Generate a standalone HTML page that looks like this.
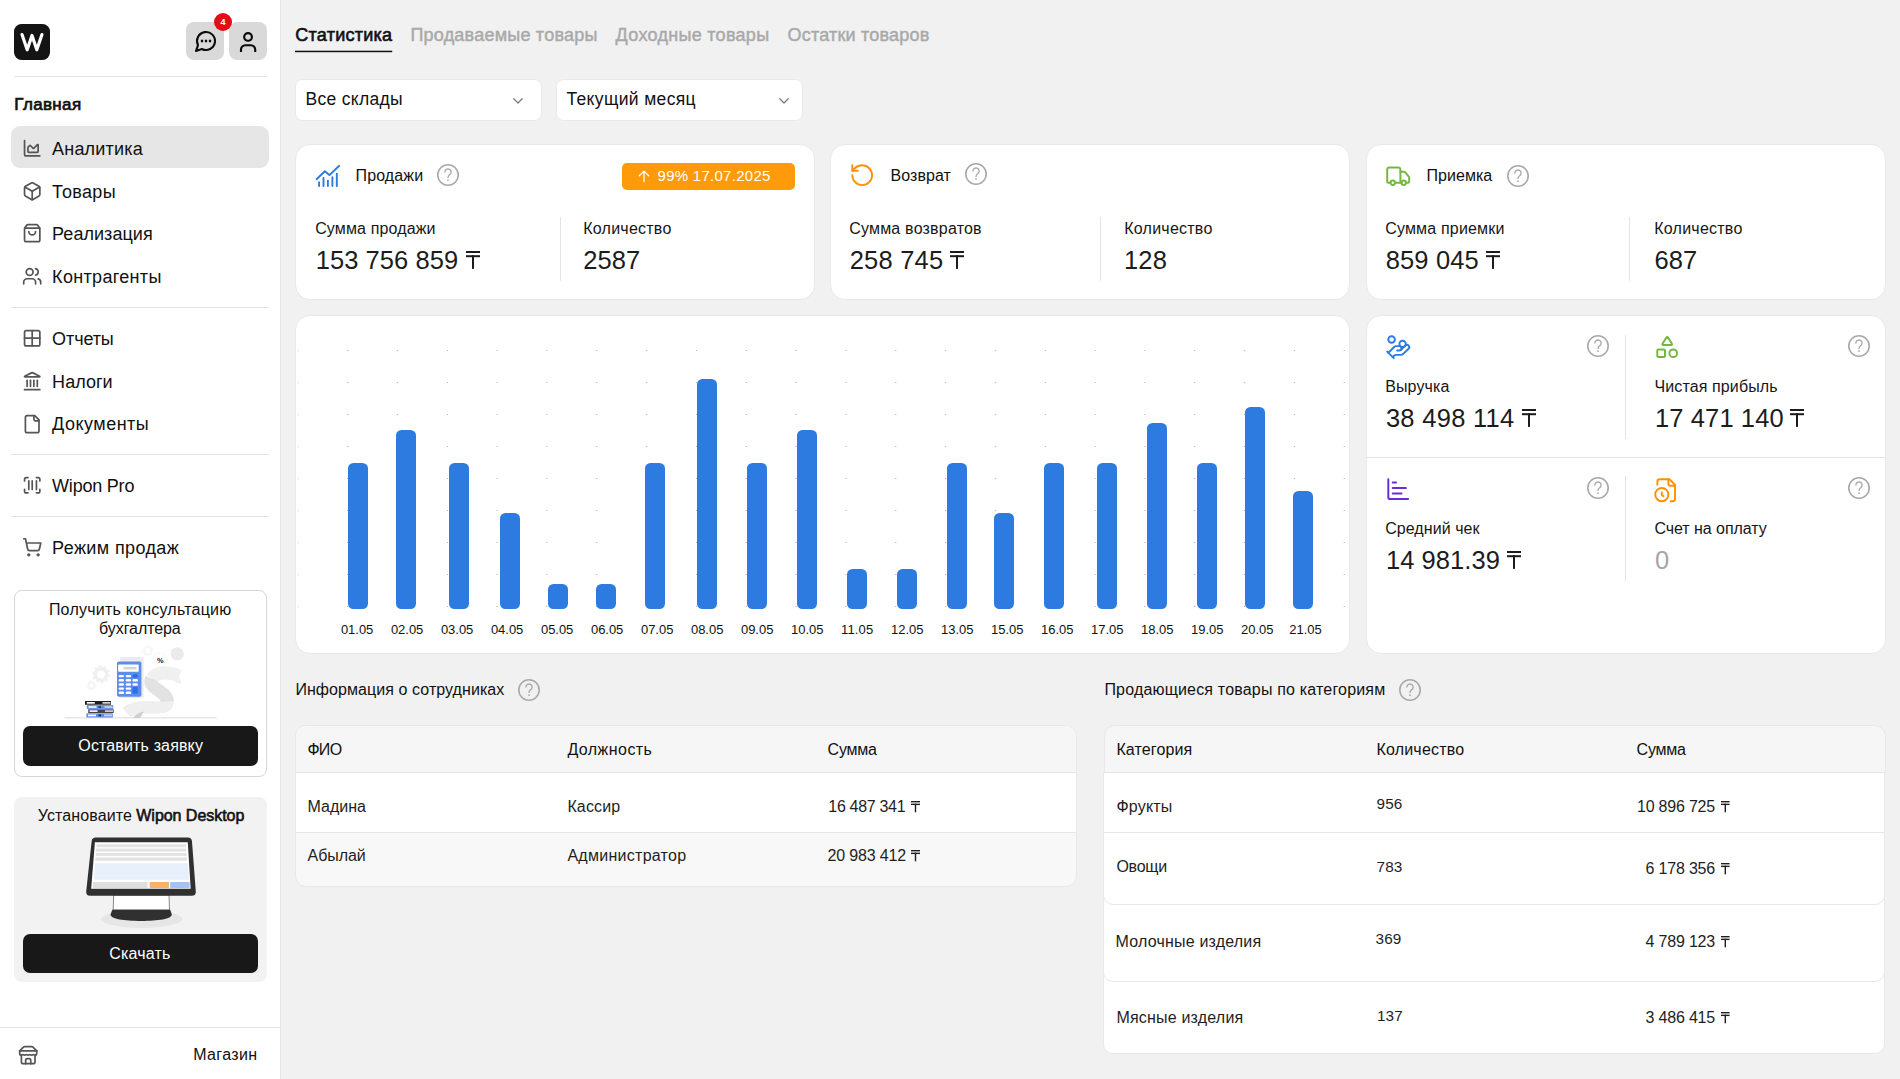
<!DOCTYPE html><html><head><meta charset="utf-8"><title>Wipon</title><style>html,body{margin:0;padding:0;overflow:hidden}body{width:1900px;height:1079px;position:relative;overflow:hidden;background:#f1f1f1;font-family:"Liberation Sans",sans-serif;}.t{position:absolute;white-space:pre;font-family:"Liberation Sans",sans-serif;}</style></head><body><div style="position:absolute;left:0px;top:0px;width:280px;height:1079px;background:#fff;border-radius:0px;box-sizing:border-box;"></div>
<div style="position:absolute;left:280px;top:0px;width:1px;height:1079px;background:#e6e6e6;border-radius:0px;box-sizing:border-box;"></div>
<div style="position:absolute;left:14px;top:24px;width:36px;height:36px;background:#141414;border-radius:7.5px;box-sizing:border-box;"></div>
<svg style="position:absolute;left:14px;top:24px;overflow:visible" width="36" height="36" viewBox="0 0 36 36" ><path d="M8 10.600 L13.200 25.800 L18 11.400 L22.800 25.800 L28 10.600" fill="none" stroke="#fff" stroke-width="3.200" stroke-linejoin="round" stroke-linecap="round"/></svg>
<div style="position:absolute;left:186px;top:22px;width:38px;height:38px;background:#d9d9d9;border-radius:8px;box-sizing:border-box;"></div>
<div style="position:absolute;left:229px;top:22px;width:38px;height:38px;background:#d9d9d9;border-radius:8px;box-sizing:border-box;"></div>
<svg style="position:absolute;left:194.1px;top:28.9px;overflow:visible" width="24" height="24" viewBox="0 0 24 24" ><g fill="none" stroke="#0a0a0a" stroke-width="2.1" stroke-linecap="round" stroke-linejoin="round"><path d="M7.900 20A9 9 0 1 0 4 16.100L2 22Z"/><path d="M8 12h.01M12 12h.01M16 12h.01" stroke-width="2.300" stroke-linecap="square"/></g></svg>
<svg style="position:absolute;left:229px;top:22px;overflow:visible" width="38" height="38" viewBox="0 0 38 38" ><g fill="none" stroke="#0a0a0a" stroke-width="2.150"><circle cx="19.050" cy="14.900" r="3.850"/><path d="M12 29.900 V27.500 a4.300 4.300 0 0 1 4.300 -4.300 h5.600 a4.300 4.300 0 0 1 4.300 4.300 V29.900"/></g></svg>
<div style="position:absolute;left:214.1px;top:12.9px;width:18px;height:18px;background:#e30d18;border-radius:9px;box-sizing:border-box;"></div>
<div style="position:absolute;left:14px;top:76px;width:253px;height:1px;background:#e4e4e4;border-radius:0px;box-sizing:border-box;"></div>
<div style="position:absolute;left:11px;top:126px;width:258px;height:42px;background:#e6e6e6;border-radius:9px;box-sizing:border-box;"></div>
<svg style="position:absolute;left:21.8px;top:137.65px;overflow:visible" width="20.4" height="20.4" viewBox="0 0 24 24" ><g fill="none" stroke="#555" stroke-width="2" stroke-linecap="round" stroke-linejoin="round"><path d="M3 3v16a2 2 0 0 0 2 2h16"/><path d="M7 11.207a.5.5 0 0 1 .146-.353l2-2a.5.5 0 0 1 .708 0l3.292 3.292a.5.5 0 0 0 .708 0l4.292-4.292a.5.5 0 0 1 .854.353V16a1 1 0 0 1-1 1H8a1 1 0 0 1-1-1z"/></g></svg>
<svg style="position:absolute;left:21.8px;top:180.60000000000002px;overflow:visible" width="20.4" height="20.4" viewBox="0 0 24 24" ><g fill="none" stroke="#555" stroke-width="2" stroke-linecap="round" stroke-linejoin="round"><path d="M21 8a2 2 0 0 0-1-1.730l-7-4a2 2 0 0 0-2 0l-7 4A2 2 0 0 0 3 8v8a2 2 0 0 0 1 1.730l7 4a2 2 0 0 0 2 0l7-4A2 2 0 0 0 21 16Z"/><path d="m3.300 7 8.700 5 8.700-5"/><path d="M12 22V12"/></g></svg>
<svg style="position:absolute;left:21.8px;top:223.3px;overflow:visible" width="20.4" height="20.4" viewBox="0 0 24 24" ><g fill="none" stroke="#555" stroke-width="2" stroke-linecap="round" stroke-linejoin="round"><path d="M16 10a4 4 0 0 1-8 0"/><path d="M3.103 6.034h17.794"/><path d="M3.400 5.467a2 2 0 0 0-.4 1.200V20a2 2 0 0 0 2 2h14a2 2 0 0 0 2-2V6.667a2 2 0 0 0-.4-1.200l-2-2.667A2 2 0 0 0 17 2H7a2 2 0 0 0-1.600.8z"/></g></svg>
<svg style="position:absolute;left:21.8px;top:266.0px;overflow:visible" width="20.4" height="20.4" viewBox="0 0 24 24" ><g fill="none" stroke="#555" stroke-width="2" stroke-linecap="round" stroke-linejoin="round"><path d="M16 21v-2a4 4 0 0 0-4-4H6a4 4 0 0 0-4 4v2"/><circle cx="9" cy="7" r="4"/><path d="M22 21v-2a4 4 0 0 0-3-3.870"/><path d="M16 3.130a4 4 0 0 1 0 7.750"/></g></svg>
<svg style="position:absolute;left:21.8px;top:327.8px;overflow:visible" width="20.4" height="20.4" viewBox="0 0 24 24" ><g fill="none" stroke="#555" stroke-width="2" stroke-linecap="round" stroke-linejoin="round"><rect x="3" y="3" width="18" height="18" rx="2"/><path d="M3 12h18"/><path d="M12 3v18"/></g></svg>
<svg style="position:absolute;left:21.8px;top:370.8px;overflow:visible" width="20.4" height="20.4" viewBox="0 0 24 24" ><g fill="none" stroke="#555" stroke-width="2" stroke-linecap="round" stroke-linejoin="round"><path d="M10 18v-7"/><path d="M11.120 2.198a2 2 0 0 1 1.760.006l7.866 3.847c.476.233.310.949-.220.949H3.474c-.530 0-.695-.716-.220-.949z"/><path d="M14 18v-7"/><path d="M18 18v-7"/><path d="M3 22h18"/><path d="M6 18v-7"/></g></svg>
<svg style="position:absolute;left:21.8px;top:413.5px;overflow:visible" width="20.4" height="20.4" viewBox="0 0 24 24" ><g fill="none" stroke="#555" stroke-width="2" stroke-linecap="round" stroke-linejoin="round"><path d="M15 2H6a2 2 0 0 0-2 2v16a2 2 0 0 0 2 2h12a2 2 0 0 0 2-2V7Z"/><path d="M14 2v4a2 2 0 0 0 2 2h4"/></g></svg>
<svg style="position:absolute;left:21.8px;top:474.8px;overflow:visible" width="20.4" height="20.4" viewBox="0 0 24 24" ><g fill="none" stroke="#555" stroke-width="2" stroke-linecap="round" stroke-linejoin="round"><path d="M3 7V5a2 2 0 0 1 2-2h2"/><path d="M17 3h2a2 2 0 0 1 2 2v2"/><path d="M21 17v2a2 2 0 0 1-2 2h-2"/><path d="M7 21H5a2 2 0 0 1-2-2v-2"/><path d="M8 7v10"/><path d="M12 7v10"/><path d="M17 7v10"/></g></svg>
<svg style="position:absolute;left:21.8px;top:536.6999999999999px;overflow:visible" width="20.4" height="20.4" viewBox="0 0 24 24" ><g fill="none" stroke="#555" stroke-width="2" stroke-linecap="round" stroke-linejoin="round"><circle cx="8" cy="21" r="1"/><circle cx="19" cy="21" r="1"/><path d="M2.050 2.050h2l2.660 12.420a2 2 0 0 0 2 1.580h9.780a2 2 0 0 0 1.950-1.570l1.650-7.430H5.120"/></g></svg>
<div style="position:absolute;left:11px;top:307px;width:258px;height:1px;background:#e4e4e4;border-radius:0px;box-sizing:border-box;"></div>
<div style="position:absolute;left:11px;top:454px;width:258px;height:1px;background:#e4e4e4;border-radius:0px;box-sizing:border-box;"></div>
<div style="position:absolute;left:11px;top:516px;width:258px;height:1px;background:#e4e4e4;border-radius:0px;box-sizing:border-box;"></div>
<div style="position:absolute;left:14px;top:590px;width:253px;height:187px;background:#fff;border-radius:8px;border:1px solid #d6d6d6;box-sizing:border-box;"></div>
<div style="position:absolute;left:23px;top:726px;width:235px;height:40px;background:#181818;border-radius:7px;box-sizing:border-box;"></div>
<div style="position:absolute;left:14px;top:797px;width:253px;height:185px;background:#f2f2f2;border-radius:8px;box-sizing:border-box;"></div>
<div style="position:absolute;left:23px;top:934px;width:235px;height:39px;background:#181818;border-radius:7px;box-sizing:border-box;"></div>
<div style="position:absolute;left:0px;top:1027px;width:280px;height:1px;background:#e4e4e4;border-radius:0px;box-sizing:border-box;"></div>
<svg style="position:absolute;left:17.85px;top:1044.85px;overflow:visible" width="20.4" height="20.4" viewBox="0 0 24 24" ><g fill="none" stroke="#555" stroke-width="2" stroke-linecap="round" stroke-linejoin="round"><path d="m2 7 4.410-4.410A2 2 0 0 1 7.830 2h8.340a2 2 0 0 1 1.420.590L22 7"/><path d="M4 12v8a2 2 0 0 0 2 2h12a2 2 0 0 0 2-2v-8"/><path d="M15 22v-4a2 2 0 0 0-2-2h-2a2 2 0 0 0-2 2v4"/><path d="M2 7h20"/><path d="M22 7v3a2 2 0 0 1-2 2a2.700 2.700 0 0 1-1.590-.630.700.700 0 0 0-.820 0A2.700 2.700 0 0 1 16 12a2.700 2.700 0 0 1-1.590-.630.700.700 0 0 0-.820 0A2.700 2.700 0 0 1 12 12a2.700 2.700 0 0 1-1.590-.630.700.700 0 0 0-.820 0A2.700 2.700 0 0 1 8 12a2.700 2.700 0 0 1-1.590-.630.700.700 0 0 0-.820 0A2.700 2.700 0 0 1 4 12a2 2 0 0 1-2-2V7"/></g></svg>
<svg style="position:absolute;left:0;top:0" width="280" height="1079" viewBox="0 0 280 1079">
<g>
<rect x="64.5" y="717.2" width="152" height="1.3" fill="#e4e4e4"/>
<g fill="none" stroke="#f0f0f0">
<circle cx="101.1" cy="674.4" r="5.8" stroke-width="3.6"/>
<circle cx="101.1" cy="674.4" r="8.3" stroke-width="1.6" stroke-dasharray="2.6 2.6"/>
<circle cx="91.5" cy="685.4" r="3" stroke-width="1.8" stroke="#f4f4f4"/>
<circle cx="91.5" cy="685.4" r="4.4" stroke-width="1" stroke-dasharray="1.6 1.6" stroke="#f4f4f4"/>
<circle cx="147.7" cy="650.6" r="3.6" stroke-width="2" stroke="#f6f6f6"/>
<circle cx="147.7" cy="650.6" r="5.2" stroke-width="1" stroke-dasharray="1.8 1.8" stroke="#f6f6f6"/>
</g>
<circle cx="177.2" cy="653.9" r="6.6" fill="#ebebeb"/>
<circle cx="160.2" cy="659.9" r="7" fill="#fff" stroke="#e4e4e4" stroke-width="0.7" stroke-dasharray="1.2 1.2"/>
<text x="160.3" y="662.600" font-family="Liberation Sans" font-size="7.4" font-weight="700" text-anchor="middle" fill="#1e1e1e">%</text>
<path d="M179 676 C170 671.5 157 671.5 151.5 678.5" fill="none" stroke="#f0f0f0" stroke-width="13"/>
<path d="M175.800 668.800 L181.800 683.500 L176 683 L170 670.500Z" fill="#f0f0f0"/>
<path d="M167.500 701 C168.500 714.500 141 700.500 126.500 712.500" fill="none" stroke="#efefef" stroke-width="12.5"/>
<path d="M151.500 678.500 C147 689 166.500 690 167.500 701.500" fill="none" stroke="#e2e2e2" stroke-width="13"/>
<path d="M133 718 C136 714 140 712 144 711.500 L140 718Z" fill="#cfcfcf"/>
<rect x="120" y="657" width="23.600" height="41" rx="1.500" fill="#ebebeb"/>
<rect x="117" y="661.500" width="24.400" height="35.300" rx="1.800" fill="#5b8def"/>
<rect x="118.100" y="664.600" width="20.600" height="7.200" rx="0.800" fill="#fff"/>
<rect x="123.500" y="667" width="13" height="2.400" fill="#c9c9c9" opacity=".8"/>
<g fill="#fff">
<rect x="118.600" y="674.900" width="5.400" height="2.400" rx="1.200"/><rect x="125.700" y="674.900" width="5.400" height="2.400" rx="1.200"/>
<rect x="118.600" y="679" width="5.400" height="2.600" rx="1.200"/><rect x="125.700" y="679" width="5.400" height="2.600" rx="1.200"/><rect x="132.500" y="679" width="5.400" height="2.600" rx="1.200"/>
<rect x="118.600" y="683.200" width="5.400" height="2.500" rx="1.200"/><rect x="125.700" y="683.200" width="5.400" height="2.500" rx="1.200"/><rect x="132.500" y="683.200" width="5.400" height="2.500" rx="1.200"/>
<rect x="118.600" y="687.400" width="5.400" height="2.400" rx="1.200"/><rect x="125.700" y="687.400" width="5.400" height="2.400" rx="1.200"/>
<rect x="118.600" y="691.600" width="5.400" height="2.500" rx="1.200"/><rect x="125.700" y="691.600" width="5.400" height="2.500" rx="1.200"/>
</g>
<ellipse cx="135.200" cy="676" rx="2.800" ry="1.900" fill="#2f6ee8"/>
<rect x="132.500" y="687" width="5.400" height="6.800" rx="1" fill="#2f6ee8"/>
<rect x="85" y="701" width="26" height="3.700" fill="#1c1c1c"/>
<rect x="86.800" y="705.100" width="26.400" height="3.800" fill="#5b8def"/>
<rect x="88.200" y="709.300" width="25.500" height="3.700" fill="#454545"/>
<rect x="86.400" y="713.300" width="26.400" height="4.200" fill="#5b8def"/>
<g fill="#fff"><rect x="86.800" y="702" width="8" height="1.700"/><rect x="88.500" y="706.200" width="8" height="1.600"/><rect x="89.500" y="710.300" width="8" height="1.600"/><rect x="88" y="714.500" width="8" height="1.800"/></g>
<g fill="#d6d6d6"><rect x="102.500" y="702" width="8" height="1.700"/><rect x="104.500" y="706.200" width="8" height="1.600"/><rect x="105" y="710.300" width="8" height="1.600"/><rect x="104" y="714.500" width="8" height="1.800"/></g>
<g fill="#2a2a2a"><rect x="98.500" y="706.200" width="2.500" height="1.600"/><rect x="98.500" y="714.500" width="2.500" height="1.800"/></g>
</g><ellipse cx="141.700" cy="919.200" rx="40.700" ry="8.700" fill="#e6e6e6"/><path d="M113.700 895 H169 L169.500 910 H113.200Z" fill="#fff" stroke="#3a3a3a" stroke-width=".6"/><path d="M112.300 909.700 H170.200 L171.800 914.500 C171.800 919 158 920.900 141.200 920.900 C124 920.900 110.500 919 110.500 914.500Z" fill="#303030"/><path d="M95.800 837.400 H187.700 Q191.700 837.400 192 841.400 L195.800 891.500 Q196.100 895.700 191.800 895.700 H90.200 Q85.900 895.700 86.200 891.500 L91.600 841.400 Q92 837.400 95.800 837.400Z" fill="#303030"/><path d="M94.900 842.300 H187.800 L190.700 888.800 H91.200Z" fill="#fff"/><g fill="#e2e2e2"><rect x="96.400" y="844.300" width="89.600" height="2.900"/><rect x="96" y="848.600" width="90.400" height="2.900"/><rect x="95.700" y="853" width="91" height="2.900"/><rect x="95.400" y="857.400" width="91.600" height="3.300"/></g><path d="M95 863.200 H187.900 L189 879.800 H93.700Z" fill="#e8f0fc"/><rect x="93" y="882" width="54.600" height="6" fill="#dedede"/><rect x="149.700" y="882" width="19.300" height="6" fill="#f5b26b"/><rect x="170.200" y="882" width="19.400" height="6" fill="#a4c2f4"/></svg>
<svg style="position:absolute;left:295px;top:50px;overflow:visible" width="98" height="3" viewBox="0 0 98 3" ><rect x="0" y="0.700" width="97.200" height="1.500" fill="#111"/></svg>
<div style="position:absolute;left:295px;top:79px;width:247px;height:42px;background:#fff;border-radius:7.5px;border:1px solid #e9e9e9;box-sizing:border-box;"></div>
<div style="position:absolute;left:556px;top:79px;width:247px;height:42px;background:#fff;border-radius:7.5px;border:1px solid #e9e9e9;box-sizing:border-box;"></div>
<svg style="position:absolute;left:513.2px;top:97.6px;overflow:visible" width="10" height="6" viewBox="0 0 10 6" ><path d="M0.8 0.8 L5 5 L9.200 0.8" fill="none" stroke="#7a7a7a" stroke-width="1.3" stroke-linecap="round" stroke-linejoin="round"/></svg>
<svg style="position:absolute;left:779px;top:97.6px;overflow:visible" width="10" height="6" viewBox="0 0 10 6" ><path d="M0.8 0.8 L5 5 L9.200 0.8" fill="none" stroke="#7a7a7a" stroke-width="1.3" stroke-linecap="round" stroke-linejoin="round"/></svg>
<div style="position:absolute;left:295px;top:144px;width:520px;height:156px;background:#fff;border-radius:15px;border:1px solid #e9e9e9;box-sizing:border-box;"></div>
<div style="position:absolute;left:830px;top:144px;width:520px;height:156px;background:#fff;border-radius:15px;border:1px solid #e9e9e9;box-sizing:border-box;"></div>
<div style="position:absolute;left:1366px;top:144px;width:520px;height:156px;background:#fff;border-radius:15px;border:1px solid #e9e9e9;box-sizing:border-box;"></div>
<svg style="position:absolute;left:466px;top:251.1px;overflow:visible" width="14" height="17.9" viewBox="0 0 14 17.9" ><rect x="0" y="0" width="14" height="2.0" fill="#1c1c1c"/><rect x="0" y="4.206499999999999" width="14" height="2.0" fill="#1c1c1c"/><rect x="6.0" y="4.206499999999999" width="2.0" height="13.6935" fill="#1c1c1c"/></svg>
<div style="position:absolute;left:560px;top:217px;width:1px;height:64px;background:#e4e4e4;border-radius:0px;box-sizing:border-box;"></div>
<svg style="position:absolute;left:950px;top:251.1px;overflow:visible" width="14" height="17.9" viewBox="0 0 14 17.9" ><rect x="0" y="0" width="14" height="2.0" fill="#1c1c1c"/><rect x="0" y="4.206499999999999" width="14" height="2.0" fill="#1c1c1c"/><rect x="6.0" y="4.206499999999999" width="2.0" height="13.6935" fill="#1c1c1c"/></svg>
<div style="position:absolute;left:1100px;top:217px;width:1px;height:64px;background:#e4e4e4;border-radius:0px;box-sizing:border-box;"></div>
<svg style="position:absolute;left:1485.6px;top:251.1px;overflow:visible" width="14" height="17.9" viewBox="0 0 14 17.9" ><rect x="0" y="0" width="14" height="2.0" fill="#1c1c1c"/><rect x="0" y="4.206499999999999" width="14" height="2.0" fill="#1c1c1c"/><rect x="6.0" y="4.206499999999999" width="2.0" height="13.6935" fill="#1c1c1c"/></svg>
<div style="position:absolute;left:1629px;top:217px;width:1px;height:64px;background:#e4e4e4;border-radius:0px;box-sizing:border-box;"></div>
<svg style="position:absolute;left:435.9px;top:163.1px;overflow:visible" width="24.0" height="24.0" viewBox="0 0 24.0 24.0" ><circle cx="12.0" cy="12.0" r="10.2" fill="none" stroke="#a9a9a9" stroke-width="1.6"/><path d="M8.9 9.1a3.1 3.1 0 1 1 4.7 2.7c-1.1.7-1.6 1.3-1.6 2.6" fill="none" stroke="#a9a9a9" stroke-width="1.35" stroke-linecap="round"/><circle cx="12.0" cy="17.1" r="0.95" fill="#a9a9a9"/></svg>
<svg style="position:absolute;left:964.0px;top:162.0px;overflow:visible" width="24.0" height="24.0" viewBox="0 0 24.0 24.0" ><circle cx="12.0" cy="12.0" r="10.2" fill="none" stroke="#a9a9a9" stroke-width="1.6"/><path d="M8.9 9.1a3.1 3.1 0 1 1 4.7 2.7c-1.1.7-1.6 1.3-1.6 2.6" fill="none" stroke="#a9a9a9" stroke-width="1.35" stroke-linecap="round"/><circle cx="12.0" cy="17.1" r="0.95" fill="#a9a9a9"/></svg>
<svg style="position:absolute;left:1505.9px;top:163.9px;overflow:visible" width="24.0" height="24.0" viewBox="0 0 24.0 24.0" ><circle cx="12.0" cy="12.0" r="10.2" fill="none" stroke="#a9a9a9" stroke-width="1.6"/><path d="M8.9 9.1a3.1 3.1 0 1 1 4.7 2.7c-1.1.7-1.6 1.3-1.6 2.6" fill="none" stroke="#a9a9a9" stroke-width="1.35" stroke-linecap="round"/><circle cx="12.0" cy="17.1" r="0.95" fill="#a9a9a9"/></svg>
<svg style="position:absolute;left:0;top:0" width="1900" height="200"><g fill="none" stroke="#2b7be4" stroke-width="1.9" stroke-linecap="round" stroke-linejoin="round"><path d="M316.6 179.2 L324.8 171.3 L329.4 175.1 L339.2 165.8"/><path d="M319.1 182.300V186M323.500 178V186M327.900 180.600V186M332.400 177.300V186M336.800 173.800V186"/></g></svg>
<svg style="position:absolute;left:848.8px;top:162.4px;overflow:visible" width="26.4" height="26.4" viewBox="0 0 24 24" ><g fill="none" stroke="#ff8f10" stroke-width="1.75" stroke-linecap="round" stroke-linejoin="round"><path d="M3 12a9 9 0 1 0 9-9 9.750 9.750 0 0 0-6.740 2.740L3 8"/><path d="M3 3v5h5"/></g></svg>
<svg style="position:absolute;left:1385.2px;top:163.4px;overflow:visible" width="26.4" height="26.4" viewBox="0 0 24 24" ><g fill="none" stroke="#76b83f" stroke-width="1.8" stroke-linecap="round" stroke-linejoin="round"><path d="M14 18V6a2 2 0 0 0-2-2H4a2 2 0 0 0-2 2v11a1 1 0 0 0 1 1h2"/><path d="M15 18H9"/><path d="M19 18h2a1 1 0 0 0 1-1v-3.650a1 1 0 0 0-.220-.624l-3.480-4.350A1 1 0 0 0 17.520 8H14"/><circle cx="17" cy="18" r="2"/><circle cx="7" cy="18" r="2"/></g></svg>
<div style="position:absolute;left:622px;top:163px;width:173px;height:26.5px;background:#ff9a0a;border-radius:5px;box-sizing:border-box;"></div>
<svg style="position:absolute;left:638px;top:169.5px;overflow:visible" width="12" height="12.5" viewBox="0 0 12 12.500" ><path d="M6 11.500V1.200M1.300 5.800 L6 1.100 L10.700 5.800" fill="none" stroke="#fff" stroke-width="1.300" stroke-linecap="round" stroke-linejoin="round"/></svg>
<div style="position:absolute;left:295px;top:315px;width:1055px;height:339px;background:#fff;border-radius:15px;border:1px solid #e9e9e9;box-sizing:border-box;"></div>
<svg style="position:absolute;left:0;top:0" width="1900" height="700"><g fill="#b2b2b2"><rect x="298.20" y="350" width="0.65" height="1"/><rect x="298.20" y="382" width="0.65" height="1"/><rect x="298.20" y="414" width="0.65" height="1"/><rect x="298.20" y="446" width="0.65" height="1"/><rect x="298.20" y="478" width="0.65" height="1"/><rect x="298.20" y="510" width="0.65" height="1"/><rect x="298.20" y="542" width="0.65" height="1"/><rect x="298.20" y="574" width="0.65" height="1"/><rect x="298.20" y="606" width="0.65" height="1"/><rect x="347.03" y="350" width="1.2" height="1"/><rect x="347.03" y="382" width="1.2" height="1"/><rect x="347.03" y="414" width="1.2" height="1"/><rect x="347.03" y="446" width="1.2" height="1"/><rect x="347.03" y="478" width="1.2" height="1"/><rect x="347.03" y="510" width="1.2" height="1"/><rect x="347.03" y="542" width="1.2" height="1"/><rect x="347.03" y="574" width="1.2" height="1"/><rect x="347.03" y="606" width="1.2" height="1"/><rect x="396.86" y="350" width="1.2" height="1"/><rect x="396.86" y="382" width="1.2" height="1"/><rect x="396.86" y="414" width="1.2" height="1"/><rect x="396.86" y="446" width="1.2" height="1"/><rect x="396.86" y="478" width="1.2" height="1"/><rect x="396.86" y="510" width="1.2" height="1"/><rect x="396.86" y="542" width="1.2" height="1"/><rect x="396.86" y="574" width="1.2" height="1"/><rect x="396.86" y="606" width="1.2" height="1"/><rect x="446.69" y="350" width="1.2" height="1"/><rect x="446.69" y="382" width="1.2" height="1"/><rect x="446.69" y="414" width="1.2" height="1"/><rect x="446.69" y="446" width="1.2" height="1"/><rect x="446.69" y="478" width="1.2" height="1"/><rect x="446.69" y="510" width="1.2" height="1"/><rect x="446.69" y="542" width="1.2" height="1"/><rect x="446.69" y="574" width="1.2" height="1"/><rect x="446.69" y="606" width="1.2" height="1"/><rect x="496.52" y="350" width="1.2" height="1"/><rect x="496.52" y="382" width="1.2" height="1"/><rect x="496.52" y="414" width="1.2" height="1"/><rect x="496.52" y="446" width="1.2" height="1"/><rect x="496.52" y="478" width="1.2" height="1"/><rect x="496.52" y="510" width="1.2" height="1"/><rect x="496.52" y="542" width="1.2" height="1"/><rect x="496.52" y="574" width="1.2" height="1"/><rect x="496.52" y="606" width="1.2" height="1"/><rect x="546.35" y="350" width="1.2" height="1"/><rect x="546.35" y="382" width="1.2" height="1"/><rect x="546.35" y="414" width="1.2" height="1"/><rect x="546.35" y="446" width="1.2" height="1"/><rect x="546.35" y="478" width="1.2" height="1"/><rect x="546.35" y="510" width="1.2" height="1"/><rect x="546.35" y="542" width="1.2" height="1"/><rect x="546.35" y="574" width="1.2" height="1"/><rect x="546.35" y="606" width="1.2" height="1"/><rect x="596.18" y="350" width="1.2" height="1"/><rect x="596.18" y="382" width="1.2" height="1"/><rect x="596.18" y="414" width="1.2" height="1"/><rect x="596.18" y="446" width="1.2" height="1"/><rect x="596.18" y="478" width="1.2" height="1"/><rect x="596.18" y="510" width="1.2" height="1"/><rect x="596.18" y="542" width="1.2" height="1"/><rect x="596.18" y="574" width="1.2" height="1"/><rect x="596.18" y="606" width="1.2" height="1"/><rect x="646.01" y="350" width="1.2" height="1"/><rect x="646.01" y="382" width="1.2" height="1"/><rect x="646.01" y="414" width="1.2" height="1"/><rect x="646.01" y="446" width="1.2" height="1"/><rect x="646.01" y="478" width="1.2" height="1"/><rect x="646.01" y="510" width="1.2" height="1"/><rect x="646.01" y="542" width="1.2" height="1"/><rect x="646.01" y="574" width="1.2" height="1"/><rect x="646.01" y="606" width="1.2" height="1"/><rect x="695.84" y="350" width="1.2" height="1"/><rect x="695.84" y="382" width="1.2" height="1"/><rect x="695.84" y="414" width="1.2" height="1"/><rect x="695.84" y="446" width="1.2" height="1"/><rect x="695.84" y="478" width="1.2" height="1"/><rect x="695.84" y="510" width="1.2" height="1"/><rect x="695.84" y="542" width="1.2" height="1"/><rect x="695.84" y="574" width="1.2" height="1"/><rect x="695.84" y="606" width="1.2" height="1"/><rect x="745.67" y="350" width="1.2" height="1"/><rect x="745.67" y="382" width="1.2" height="1"/><rect x="745.67" y="414" width="1.2" height="1"/><rect x="745.67" y="446" width="1.2" height="1"/><rect x="745.67" y="478" width="1.2" height="1"/><rect x="745.67" y="510" width="1.2" height="1"/><rect x="745.67" y="542" width="1.2" height="1"/><rect x="745.67" y="574" width="1.2" height="1"/><rect x="745.67" y="606" width="1.2" height="1"/><rect x="795.50" y="350" width="1.2" height="1"/><rect x="795.50" y="382" width="1.2" height="1"/><rect x="795.50" y="414" width="1.2" height="1"/><rect x="795.50" y="446" width="1.2" height="1"/><rect x="795.50" y="478" width="1.2" height="1"/><rect x="795.50" y="510" width="1.2" height="1"/><rect x="795.50" y="542" width="1.2" height="1"/><rect x="795.50" y="574" width="1.2" height="1"/><rect x="795.50" y="606" width="1.2" height="1"/><rect x="845.33" y="350" width="1.2" height="1"/><rect x="845.33" y="382" width="1.2" height="1"/><rect x="845.33" y="414" width="1.2" height="1"/><rect x="845.33" y="446" width="1.2" height="1"/><rect x="845.33" y="478" width="1.2" height="1"/><rect x="845.33" y="510" width="1.2" height="1"/><rect x="845.33" y="542" width="1.2" height="1"/><rect x="845.33" y="574" width="1.2" height="1"/><rect x="845.33" y="606" width="1.2" height="1"/><rect x="895.16" y="350" width="1.2" height="1"/><rect x="895.16" y="382" width="1.2" height="1"/><rect x="895.16" y="414" width="1.2" height="1"/><rect x="895.16" y="446" width="1.2" height="1"/><rect x="895.16" y="478" width="1.2" height="1"/><rect x="895.16" y="510" width="1.2" height="1"/><rect x="895.16" y="542" width="1.2" height="1"/><rect x="895.16" y="574" width="1.2" height="1"/><rect x="895.16" y="606" width="1.2" height="1"/><rect x="944.99" y="350" width="1.2" height="1"/><rect x="944.99" y="382" width="1.2" height="1"/><rect x="944.99" y="414" width="1.2" height="1"/><rect x="944.99" y="446" width="1.2" height="1"/><rect x="944.99" y="478" width="1.2" height="1"/><rect x="944.99" y="510" width="1.2" height="1"/><rect x="944.99" y="542" width="1.2" height="1"/><rect x="944.99" y="574" width="1.2" height="1"/><rect x="944.99" y="606" width="1.2" height="1"/><rect x="994.82" y="350" width="1.2" height="1"/><rect x="994.82" y="382" width="1.2" height="1"/><rect x="994.82" y="414" width="1.2" height="1"/><rect x="994.82" y="446" width="1.2" height="1"/><rect x="994.82" y="478" width="1.2" height="1"/><rect x="994.82" y="510" width="1.2" height="1"/><rect x="994.82" y="542" width="1.2" height="1"/><rect x="994.82" y="574" width="1.2" height="1"/><rect x="994.82" y="606" width="1.2" height="1"/><rect x="1044.65" y="350" width="1.2" height="1"/><rect x="1044.65" y="382" width="1.2" height="1"/><rect x="1044.65" y="414" width="1.2" height="1"/><rect x="1044.65" y="446" width="1.2" height="1"/><rect x="1044.65" y="478" width="1.2" height="1"/><rect x="1044.65" y="510" width="1.2" height="1"/><rect x="1044.65" y="542" width="1.2" height="1"/><rect x="1044.65" y="574" width="1.2" height="1"/><rect x="1044.65" y="606" width="1.2" height="1"/><rect x="1094.48" y="350" width="1.2" height="1"/><rect x="1094.48" y="382" width="1.2" height="1"/><rect x="1094.48" y="414" width="1.2" height="1"/><rect x="1094.48" y="446" width="1.2" height="1"/><rect x="1094.48" y="478" width="1.2" height="1"/><rect x="1094.48" y="510" width="1.2" height="1"/><rect x="1094.48" y="542" width="1.2" height="1"/><rect x="1094.48" y="574" width="1.2" height="1"/><rect x="1094.48" y="606" width="1.2" height="1"/><rect x="1144.31" y="350" width="1.2" height="1"/><rect x="1144.31" y="382" width="1.2" height="1"/><rect x="1144.31" y="414" width="1.2" height="1"/><rect x="1144.31" y="446" width="1.2" height="1"/><rect x="1144.31" y="478" width="1.2" height="1"/><rect x="1144.31" y="510" width="1.2" height="1"/><rect x="1144.31" y="542" width="1.2" height="1"/><rect x="1144.31" y="574" width="1.2" height="1"/><rect x="1144.31" y="606" width="1.2" height="1"/><rect x="1194.14" y="350" width="1.2" height="1"/><rect x="1194.14" y="382" width="1.2" height="1"/><rect x="1194.14" y="414" width="1.2" height="1"/><rect x="1194.14" y="446" width="1.2" height="1"/><rect x="1194.14" y="478" width="1.2" height="1"/><rect x="1194.14" y="510" width="1.2" height="1"/><rect x="1194.14" y="542" width="1.2" height="1"/><rect x="1194.14" y="574" width="1.2" height="1"/><rect x="1194.14" y="606" width="1.2" height="1"/><rect x="1243.97" y="350" width="1.2" height="1"/><rect x="1243.97" y="382" width="1.2" height="1"/><rect x="1243.97" y="414" width="1.2" height="1"/><rect x="1243.97" y="446" width="1.2" height="1"/><rect x="1243.97" y="478" width="1.2" height="1"/><rect x="1243.97" y="510" width="1.2" height="1"/><rect x="1243.97" y="542" width="1.2" height="1"/><rect x="1243.97" y="574" width="1.2" height="1"/><rect x="1243.97" y="606" width="1.2" height="1"/><rect x="1293.80" y="350" width="1.2" height="1"/><rect x="1293.80" y="382" width="1.2" height="1"/><rect x="1293.80" y="414" width="1.2" height="1"/><rect x="1293.80" y="446" width="1.2" height="1"/><rect x="1293.80" y="478" width="1.2" height="1"/><rect x="1293.80" y="510" width="1.2" height="1"/><rect x="1293.80" y="542" width="1.2" height="1"/><rect x="1293.80" y="574" width="1.2" height="1"/><rect x="1293.80" y="606" width="1.2" height="1"/><rect x="1343.63" y="350" width="1.2" height="1"/><rect x="1343.63" y="382" width="1.2" height="1"/><rect x="1343.63" y="414" width="1.2" height="1"/><rect x="1343.63" y="446" width="1.2" height="1"/><rect x="1343.63" y="478" width="1.2" height="1"/><rect x="1343.63" y="510" width="1.2" height="1"/><rect x="1343.63" y="542" width="1.2" height="1"/><rect x="1343.63" y="574" width="1.2" height="1"/><rect x="1343.63" y="606" width="1.2" height="1"/></g></svg>
<div style="position:absolute;left:348px;top:463px;width:20px;height:146px;background:#2d7be0;border-radius:5.5px;box-sizing:border-box;"></div>
<div style="position:absolute;left:396px;top:430px;width:20px;height:179px;background:#2d7be0;border-radius:5.5px;box-sizing:border-box;"></div>
<div style="position:absolute;left:449px;top:463px;width:20px;height:146px;background:#2d7be0;border-radius:5.5px;box-sizing:border-box;"></div>
<div style="position:absolute;left:500px;top:513px;width:20px;height:96px;background:#2d7be0;border-radius:5.5px;box-sizing:border-box;"></div>
<div style="position:absolute;left:548px;top:584px;width:20px;height:25px;background:#2d7be0;border-radius:5.5px;box-sizing:border-box;"></div>
<div style="position:absolute;left:596px;top:584px;width:20px;height:25px;background:#2d7be0;border-radius:5.5px;box-sizing:border-box;"></div>
<div style="position:absolute;left:645px;top:463px;width:20px;height:146px;background:#2d7be0;border-radius:5.5px;box-sizing:border-box;"></div>
<div style="position:absolute;left:697px;top:379px;width:20px;height:230px;background:#2d7be0;border-radius:5.5px;box-sizing:border-box;"></div>
<div style="position:absolute;left:747px;top:463px;width:20px;height:146px;background:#2d7be0;border-radius:5.5px;box-sizing:border-box;"></div>
<div style="position:absolute;left:797px;top:430px;width:20px;height:179px;background:#2d7be0;border-radius:5.5px;box-sizing:border-box;"></div>
<div style="position:absolute;left:847px;top:569px;width:20px;height:40px;background:#2d7be0;border-radius:5.5px;box-sizing:border-box;"></div>
<div style="position:absolute;left:897px;top:569px;width:20px;height:40px;background:#2d7be0;border-radius:5.5px;box-sizing:border-box;"></div>
<div style="position:absolute;left:947px;top:463px;width:20px;height:146px;background:#2d7be0;border-radius:5.5px;box-sizing:border-box;"></div>
<div style="position:absolute;left:994px;top:513px;width:20px;height:96px;background:#2d7be0;border-radius:5.5px;box-sizing:border-box;"></div>
<div style="position:absolute;left:1044px;top:463px;width:20px;height:146px;background:#2d7be0;border-radius:5.5px;box-sizing:border-box;"></div>
<div style="position:absolute;left:1097px;top:463px;width:20px;height:146px;background:#2d7be0;border-radius:5.5px;box-sizing:border-box;"></div>
<div style="position:absolute;left:1147px;top:423px;width:20px;height:186px;background:#2d7be0;border-radius:5.5px;box-sizing:border-box;"></div>
<div style="position:absolute;left:1197px;top:463px;width:20px;height:146px;background:#2d7be0;border-radius:5.5px;box-sizing:border-box;"></div>
<div style="position:absolute;left:1245px;top:407px;width:20px;height:202px;background:#2d7be0;border-radius:5.5px;box-sizing:border-box;"></div>
<div style="position:absolute;left:1293px;top:491px;width:20px;height:118px;background:#2d7be0;border-radius:5.5px;box-sizing:border-box;"></div>
<div style="position:absolute;left:1366px;top:315px;width:520px;height:339px;background:#fff;border-radius:15px;border:1px solid #e9e9e9;box-sizing:border-box;"></div>
<div style="position:absolute;left:1367px;top:457px;width:518px;height:1px;background:#e6e6e6;border-radius:0px;box-sizing:border-box;"></div>
<div style="position:absolute;left:1625px;top:335px;width:1px;height:104px;background:#e4e4e4;border-radius:0px;box-sizing:border-box;"></div>
<div style="position:absolute;left:1625px;top:476px;width:1px;height:105px;background:#e4e4e4;border-radius:0px;box-sizing:border-box;"></div>
<svg style="position:absolute;left:1521.6px;top:409.1px;overflow:visible" width="14" height="17.9" viewBox="0 0 14 17.9" ><rect x="0" y="0" width="14" height="2.0" fill="#1c1c1c"/><rect x="0" y="4.206499999999999" width="14" height="2.0" fill="#1c1c1c"/><rect x="6.0" y="4.206499999999999" width="2.0" height="13.6935" fill="#1c1c1c"/></svg>
<svg style="position:absolute;left:1789.9px;top:409.1px;overflow:visible" width="14" height="17.9" viewBox="0 0 14 17.9" ><rect x="0" y="0" width="14" height="2.0" fill="#1c1c1c"/><rect x="0" y="4.206499999999999" width="14" height="2.0" fill="#1c1c1c"/><rect x="6.0" y="4.206499999999999" width="2.0" height="13.6935" fill="#1c1c1c"/></svg>
<svg style="position:absolute;left:1507.4px;top:551.1px;overflow:visible" width="14" height="17.9" viewBox="0 0 14 17.9" ><rect x="0" y="0" width="14" height="2.0" fill="#1c1c1c"/><rect x="0" y="4.206499999999999" width="14" height="2.0" fill="#1c1c1c"/><rect x="6.0" y="4.206499999999999" width="2.0" height="13.6935" fill="#1c1c1c"/></svg>
<svg style="position:absolute;left:1586.0px;top:334.0px;overflow:visible" width="24.0" height="24.0" viewBox="0 0 24.0 24.0" ><circle cx="12.0" cy="12.0" r="10.2" fill="none" stroke="#a9a9a9" stroke-width="1.6"/><path d="M8.9 9.1a3.1 3.1 0 1 1 4.7 2.7c-1.1.7-1.6 1.3-1.6 2.6" fill="none" stroke="#a9a9a9" stroke-width="1.35" stroke-linecap="round"/><circle cx="12.0" cy="17.1" r="0.95" fill="#a9a9a9"/></svg>
<svg style="position:absolute;left:1847.0px;top:334.0px;overflow:visible" width="24.0" height="24.0" viewBox="0 0 24.0 24.0" ><circle cx="12.0" cy="12.0" r="10.2" fill="none" stroke="#a9a9a9" stroke-width="1.6"/><path d="M8.9 9.1a3.1 3.1 0 1 1 4.7 2.7c-1.1.7-1.6 1.3-1.6 2.6" fill="none" stroke="#a9a9a9" stroke-width="1.35" stroke-linecap="round"/><circle cx="12.0" cy="17.1" r="0.95" fill="#a9a9a9"/></svg>
<svg style="position:absolute;left:1586.0px;top:476.0px;overflow:visible" width="24.0" height="24.0" viewBox="0 0 24.0 24.0" ><circle cx="12.0" cy="12.0" r="10.2" fill="none" stroke="#a9a9a9" stroke-width="1.6"/><path d="M8.9 9.1a3.1 3.1 0 1 1 4.7 2.7c-1.1.7-1.6 1.3-1.6 2.6" fill="none" stroke="#a9a9a9" stroke-width="1.35" stroke-linecap="round"/><circle cx="12.0" cy="17.1" r="0.95" fill="#a9a9a9"/></svg>
<svg style="position:absolute;left:1847.0px;top:476.0px;overflow:visible" width="24.0" height="24.0" viewBox="0 0 24.0 24.0" ><circle cx="12.0" cy="12.0" r="10.2" fill="none" stroke="#a9a9a9" stroke-width="1.6"/><path d="M8.9 9.1a3.1 3.1 0 1 1 4.7 2.7c-1.1.7-1.6 1.3-1.6 2.6" fill="none" stroke="#a9a9a9" stroke-width="1.35" stroke-linecap="round"/><circle cx="12.0" cy="17.1" r="0.95" fill="#a9a9a9"/></svg>
<svg style="position:absolute;left:1384.8px;top:333.8px;overflow:visible" width="26.4" height="26.4" viewBox="0 0 24 24" ><g fill="none" stroke="#2b7be4" stroke-width="1.75" stroke-linecap="round" stroke-linejoin="round"><path d="M11 15h2a2 2 0 1 0 0-4h-3c-.6 0-1.100.2-1.400.6L3 17"/><path d="m7 21 1.600-1.400c.3-.4.800-.6 1.400-.6h4c1.100 0 2.100-.4 2.800-1.200l4.600-4.400a2 2 0 0 0-2.750-2.910l-4.200 3.900"/><path d="m2 16 6 6"/><circle cx="16" cy="9" r="2.900"/><circle cx="6" cy="5" r="3"/></g></svg>
<svg style="position:absolute;left:1653.7px;top:333.5px;overflow:visible" width="26.4" height="26.4" viewBox="0 0 24 24" ><g fill="none" stroke="#76b83f" stroke-width="1.8" stroke-linecap="round" stroke-linejoin="round"><path d="M8.300 10a.7.7 0 0 1-.626-1.079L11.400 3a.7.7 0 0 1 1.198-.043L16.300 8.900a.7.7 0 0 1-.572 1.100Z"/><rect x="3" y="14" width="7" height="7" rx="1"/><circle cx="17.500" cy="17.500" r="3.500"/></g></svg>
<svg style="position:absolute;left:1384.75px;top:476.4px;overflow:visible" width="26.4" height="26.4" viewBox="0 0 24 24" ><g fill="none" stroke="#6d2bd9" stroke-width="1.8" stroke-linecap="round" stroke-linejoin="round"><path d="M3 3v16a2 2 0 0 0 2 2h16"/><path d="M7 16h8"/><path d="M7 11h12"/><path d="M7 6h3"/></g></svg>
<svg style="position:absolute;left:1652.7px;top:476.7px;overflow:visible" width="26.4" height="26.4" viewBox="0 0 24 24" ><g fill="none" stroke="#ff9100" stroke-width="1.75" stroke-linecap="round" stroke-linejoin="round"><path d="M16 22h2a2 2 0 0 0 2-2V7l-5-5H6a2 2 0 0 0-2 2v3"/><path d="M14 2v4a2 2 0 0 0 2 2h4"/><circle cx="8" cy="16" r="6"/><path d="M9.500 17.500 8 16.250V14"/></g></svg>
<svg style="position:absolute;left:517.0px;top:678.0px;overflow:visible" width="24.0" height="24.0" viewBox="0 0 24.0 24.0" ><circle cx="12.0" cy="12.0" r="10.2" fill="none" stroke="#a9a9a9" stroke-width="1.6"/><path d="M8.9 9.1a3.1 3.1 0 1 1 4.7 2.7c-1.1.7-1.6 1.3-1.6 2.6" fill="none" stroke="#a9a9a9" stroke-width="1.35" stroke-linecap="round"/><circle cx="12.0" cy="17.1" r="0.95" fill="#a9a9a9"/></svg>
<svg style="position:absolute;left:1398.0px;top:678.0px;overflow:visible" width="24.0" height="24.0" viewBox="0 0 24.0 24.0" ><circle cx="12.0" cy="12.0" r="10.2" fill="none" stroke="#a9a9a9" stroke-width="1.6"/><path d="M8.9 9.1a3.1 3.1 0 1 1 4.7 2.7c-1.1.7-1.6 1.3-1.6 2.6" fill="none" stroke="#a9a9a9" stroke-width="1.35" stroke-linecap="round"/><circle cx="12.0" cy="17.1" r="0.95" fill="#a9a9a9"/></svg>
<div style="position:absolute;left:295px;top:725px;width:782px;height:162px;background:#f8f8f8;border-radius:11px;border:1px solid #e8e8e8;box-sizing:border-box;"></div>
<div style="position:absolute;left:296px;top:726px;width:780px;height:46px;background:#f6f6f6;border-radius:0px;box-sizing:border-box;border-radius:10px 10px 0 0"></div>
<div style="position:absolute;left:296px;top:773px;width:780px;height:59px;background:#fff;border-radius:0px;box-sizing:border-box;"></div>
<div style="position:absolute;left:296px;top:772px;width:780px;height:1px;background:#e6e6e6;border-radius:0px;box-sizing:border-box;"></div>
<div style="position:absolute;left:296px;top:832px;width:780px;height:1px;background:#e6e6e6;border-radius:0px;box-sizing:border-box;"></div>
<svg style="position:absolute;left:910.8px;top:800.7px;overflow:visible" width="9" height="11.3" viewBox="0 0 9 11.3" ><rect x="0" y="0" width="9" height="1.4" fill="#1e1e1e"/><rect x="0" y="2.6555" width="9" height="1.4" fill="#1e1e1e"/><rect x="3.8" y="2.6555" width="1.4" height="8.6445" fill="#1e1e1e"/></svg>
<svg style="position:absolute;left:910.8px;top:849.7px;overflow:visible" width="9" height="11.3" viewBox="0 0 9 11.3" ><rect x="0" y="0" width="9" height="1.4" fill="#1e1e1e"/><rect x="0" y="2.6555" width="9" height="1.4" fill="#1e1e1e"/><rect x="3.8" y="2.6555" width="1.4" height="8.6445" fill="#1e1e1e"/></svg>
<div style="position:absolute;left:1103px;top:960px;width:782px;height:94px;background:#fff;border-radius:0px;border:1px solid #e8e8e8;box-sizing:border-box;border-radius:0 0 10px 10px"></div>
<div style="position:absolute;left:1103px;top:890px;width:782px;height:92px;background:#fff;border-radius:0px;border:1px solid #e8e8e8;box-sizing:border-box;border-radius:0 0 10px 10px"></div>
<div style="position:absolute;left:1103px;top:772px;width:782px;height:133px;background:#fff;border-radius:0px;border:1px solid #e8e8e8;box-sizing:border-box;border-radius:0 0 10px 10px"></div>
<div style="position:absolute;left:1104px;top:725px;width:782px;height:48px;background:#f6f6f6;border-radius:0px;border:1px solid #e8e8e8;box-sizing:border-box;border-radius:11px 11px 0 0"></div>
<div style="position:absolute;left:1104px;top:832px;width:780px;height:1px;background:#e6e6e6;border-radius:0px;box-sizing:border-box;"></div>
<div style="position:absolute;left:1104px;top:772px;width:781px;height:1px;background:#e6e6e6;border-radius:0px;box-sizing:border-box;"></div>
<svg style="position:absolute;left:1720.6px;top:800.7px;overflow:visible" width="8.6" height="11.3" viewBox="0 0 8.6 11.3" ><rect x="0" y="0" width="8.6" height="1.4" fill="#1e1e1e"/><rect x="0" y="2.6555" width="8.6" height="1.4" fill="#1e1e1e"/><rect x="3.5999999999999996" y="2.6555" width="1.4" height="8.6445" fill="#1e1e1e"/></svg>
<svg style="position:absolute;left:1720.6px;top:862.7px;overflow:visible" width="8.6" height="11.3" viewBox="0 0 8.6 11.3" ><rect x="0" y="0" width="8.6" height="1.4" fill="#1e1e1e"/><rect x="0" y="2.6555" width="8.6" height="1.4" fill="#1e1e1e"/><rect x="3.5999999999999996" y="2.6555" width="1.4" height="8.6445" fill="#1e1e1e"/></svg>
<svg style="position:absolute;left:1720.6px;top:935.7px;overflow:visible" width="8.6" height="11.3" viewBox="0 0 8.6 11.3" ><rect x="0" y="0" width="8.6" height="1.4" fill="#1e1e1e"/><rect x="0" y="2.6555" width="8.6" height="1.4" fill="#1e1e1e"/><rect x="3.5999999999999996" y="2.6555" width="1.4" height="8.6445" fill="#1e1e1e"/></svg>
<svg style="position:absolute;left:1720.6px;top:1011.7px;overflow:visible" width="8.6" height="11.3" viewBox="0 0 8.6 11.3" ><rect x="0" y="0" width="8.6" height="1.4" fill="#1e1e1e"/><rect x="0" y="2.6555" width="8.6" height="1.4" fill="#1e1e1e"/><rect x="3.5999999999999996" y="2.6555" width="1.4" height="8.6445" fill="#1e1e1e"/></svg>
<div class="t" style="left:220.59px;top:17.00px;font-size:9px;line-height:10px;font-weight:700;color:#fff;letter-spacing:0.000px;">4</div>
<div class="t" style="left:14.30px;top:95.00px;font-size:17px;line-height:19px;font-weight:400;color:#111;letter-spacing:0.354px;-webkit-text-stroke:0.7px #111;">Главная</div>
<div class="t" style="left:52.10px;top:139.00px;font-size:18px;line-height:20px;font-weight:400;color:#111;letter-spacing:0.188px;">Аналитика</div>
<div class="t" style="left:52.10px;top:182.00px;font-size:18px;line-height:20px;font-weight:400;color:#111;letter-spacing:0.313px;">Товары</div>
<div class="t" style="left:52.10px;top:224.00px;font-size:18px;line-height:20px;font-weight:400;color:#111;letter-spacing:0.043px;">Реализация</div>
<div class="t" style="left:52.10px;top:267.00px;font-size:18px;line-height:20px;font-weight:400;color:#111;letter-spacing:0.326px;">Контрагенты</div>
<div class="t" style="left:52.10px;top:329.00px;font-size:18px;line-height:20px;font-weight:400;color:#111;letter-spacing:-0.103px;">Отчеты</div>
<div class="t" style="left:52.10px;top:372.00px;font-size:18px;line-height:20px;font-weight:400;color:#111;letter-spacing:0.040px;">Налоги</div>
<div class="t" style="left:52.10px;top:414.00px;font-size:18px;line-height:20px;font-weight:400;color:#111;letter-spacing:0.478px;">Документы</div>
<div class="t" style="left:52.10px;top:476.00px;font-size:18px;line-height:20px;font-weight:400;color:#111;letter-spacing:-0.216px;">Wipon Pro</div>
<div class="t" style="left:52.10px;top:538.00px;font-size:18px;line-height:20px;font-weight:400;color:#111;letter-spacing:0.389px;">Режим продаж</div>
<div class="t" style="left:48.90px;top:601.00px;font-size:16px;line-height:17px;font-weight:400;color:#111;letter-spacing:0.224px;">Получить консультацию</div>
<div class="t" style="left:99.10px;top:620.00px;font-size:16px;line-height:17px;font-weight:400;color:#111;letter-spacing:-0.078px;">бухгалтера</div>
<div class="t" style="left:78.30px;top:737.00px;font-size:16px;line-height:17px;font-weight:400;color:#fff;letter-spacing:0.145px;">Оставить заявку</div>
<div class="t" style="left:37.70px;top:807.00px;font-size:16px;line-height:17px;font-weight:400;color:#111;letter-spacing:0.114px;">Установаите </div>
<div class="t" style="left:136.30px;top:807.00px;font-size:16px;line-height:17px;font-weight:400;color:#111;letter-spacing:-0.038px;-webkit-text-stroke:0.6px #111;">Wipon Desktop</div>
<div class="t" style="left:109.20px;top:945.00px;font-size:16px;line-height:17px;font-weight:400;color:#fff;letter-spacing:0.171px;">Скачать</div>
<div class="t" style="left:193.20px;top:1046.00px;font-size:16px;line-height:17px;font-weight:400;color:#111;letter-spacing:0.383px;">Магазин</div>
<div class="t" style="left:295.30px;top:25.00px;font-size:18px;line-height:20px;font-weight:400;color:#111;letter-spacing:0.245px;-webkit-text-stroke:0.6px #111;">Статистика</div>
<div class="t" style="left:410.40px;top:25.00px;font-size:18px;line-height:20px;font-weight:400;color:#a9a9a9;letter-spacing:0.225px;-webkit-text-stroke:0.45px #a9a9a9;">Продаваемые товары</div>
<div class="t" style="left:615.60px;top:25.00px;font-size:18px;line-height:20px;font-weight:400;color:#a9a9a9;letter-spacing:0.294px;-webkit-text-stroke:0.45px #a9a9a9;">Доходные товары</div>
<div class="t" style="left:787.60px;top:25.00px;font-size:18px;line-height:20px;font-weight:400;color:#a9a9a9;letter-spacing:0.197px;-webkit-text-stroke:0.45px #a9a9a9;">Остатки товаров</div>
<div class="t" style="left:305.40px;top:89.00px;font-size:17.5px;line-height:20px;font-weight:400;color:#111;letter-spacing:0.324px;">Все склады</div>
<div class="t" style="left:566.40px;top:89.00px;font-size:17.5px;line-height:20px;font-weight:400;color:#111;letter-spacing:0.363px;">Текущий месяц</div>
<div class="t" style="left:355.60px;top:167.00px;font-size:16px;line-height:17px;font-weight:400;color:#111;letter-spacing:0.110px;">Продажи</div>
<div class="t" style="left:315.20px;top:220.00px;font-size:16px;line-height:17px;font-weight:400;color:#161616;letter-spacing:0.131px;">Сумма продажи</div>
<div class="t" style="left:315.70px;top:246.00px;font-size:25.5px;line-height:28px;font-weight:400;color:#1c1c1c;letter-spacing:0.072px;">153 756 859</div>
<div class="t" style="left:583.20px;top:220.00px;font-size:16px;line-height:17px;font-weight:400;color:#161616;letter-spacing:0.248px;">Количество</div>
<div class="t" style="left:583.30px;top:246.00px;font-size:25.5px;line-height:28px;font-weight:400;color:#1c1c1c;letter-spacing:0.066px;">2587</div>
<div class="t" style="left:890.50px;top:167.00px;font-size:16px;line-height:17px;font-weight:400;color:#111;letter-spacing:0.057px;">Возврат</div>
<div class="t" style="left:849.20px;top:220.00px;font-size:16px;line-height:17px;font-weight:400;color:#161616;letter-spacing:0.200px;">Сумма возвратов</div>
<div class="t" style="left:849.70px;top:246.00px;font-size:25.5px;line-height:28px;font-weight:400;color:#1c1c1c;letter-spacing:0.202px;">258 745</div>
<div class="t" style="left:1124.20px;top:220.00px;font-size:16px;line-height:17px;font-weight:400;color:#161616;letter-spacing:0.248px;">Количество</div>
<div class="t" style="left:1124.00px;top:246.00px;font-size:25.5px;line-height:28px;font-weight:400;color:#1c1c1c;letter-spacing:0.151px;">128</div>
<div class="t" style="left:1426.50px;top:167.00px;font-size:16px;line-height:17px;font-weight:400;color:#111;letter-spacing:0.045px;">Приемка</div>
<div class="t" style="left:1385.20px;top:220.00px;font-size:16px;line-height:17px;font-weight:400;color:#161616;letter-spacing:0.180px;">Сумма приемки</div>
<div class="t" style="left:1385.70px;top:246.00px;font-size:25.5px;line-height:28px;font-weight:400;color:#1c1c1c;letter-spacing:0.145px;">859 045</div>
<div class="t" style="left:1654.20px;top:220.00px;font-size:16px;line-height:17px;font-weight:400;color:#161616;letter-spacing:0.248px;">Количество</div>
<div class="t" style="left:1654.60px;top:246.00px;font-size:25.5px;line-height:28px;font-weight:400;color:#1c1c1c;letter-spacing:-0.016px;">687</div>
<div class="t" style="left:657.60px;top:167.00px;font-size:15px;line-height:17px;font-weight:400;color:#fff;letter-spacing:0.267px;">99% 17.07.2025</div>
<div class="t" style="left:340.90px;top:622.00px;font-size:13px;line-height:15px;font-weight:400;color:#111;letter-spacing:-0.029px;">01.05</div>
<div class="t" style="left:390.91px;top:622.00px;font-size:13px;line-height:15px;font-weight:400;color:#111;letter-spacing:-0.029px;">02.05</div>
<div class="t" style="left:440.92px;top:622.00px;font-size:13px;line-height:15px;font-weight:400;color:#111;letter-spacing:-0.029px;">03.05</div>
<div class="t" style="left:490.93px;top:622.00px;font-size:13px;line-height:15px;font-weight:400;color:#111;letter-spacing:-0.029px;">04.05</div>
<div class="t" style="left:540.94px;top:622.00px;font-size:13px;line-height:15px;font-weight:400;color:#111;letter-spacing:-0.029px;">05.05</div>
<div class="t" style="left:590.95px;top:622.00px;font-size:13px;line-height:15px;font-weight:400;color:#111;letter-spacing:-0.029px;">06.05</div>
<div class="t" style="left:640.96px;top:622.00px;font-size:13px;line-height:15px;font-weight:400;color:#111;letter-spacing:-0.029px;">07.05</div>
<div class="t" style="left:690.97px;top:622.00px;font-size:13px;line-height:15px;font-weight:400;color:#111;letter-spacing:-0.029px;">08.05</div>
<div class="t" style="left:740.98px;top:622.00px;font-size:13px;line-height:15px;font-weight:400;color:#111;letter-spacing:-0.029px;">09.05</div>
<div class="t" style="left:790.99px;top:622.00px;font-size:13px;line-height:15px;font-weight:400;color:#111;letter-spacing:-0.029px;">10.05</div>
<div class="t" style="left:841.00px;top:622.00px;font-size:13px;line-height:15px;font-weight:400;color:#111;letter-spacing:0.164px;">11.05</div>
<div class="t" style="left:891.01px;top:622.00px;font-size:13px;line-height:15px;font-weight:400;color:#111;letter-spacing:-0.029px;">12.05</div>
<div class="t" style="left:941.02px;top:622.00px;font-size:13px;line-height:15px;font-weight:400;color:#111;letter-spacing:-0.029px;">13.05</div>
<div class="t" style="left:991.03px;top:622.00px;font-size:13px;line-height:15px;font-weight:400;color:#111;letter-spacing:-0.029px;">15.05</div>
<div class="t" style="left:1041.04px;top:622.00px;font-size:13px;line-height:15px;font-weight:400;color:#111;letter-spacing:-0.029px;">16.05</div>
<div class="t" style="left:1091.05px;top:622.00px;font-size:13px;line-height:15px;font-weight:400;color:#111;letter-spacing:-0.029px;">17.05</div>
<div class="t" style="left:1141.06px;top:622.00px;font-size:13px;line-height:15px;font-weight:400;color:#111;letter-spacing:-0.029px;">18.05</div>
<div class="t" style="left:1191.07px;top:622.00px;font-size:13px;line-height:15px;font-weight:400;color:#111;letter-spacing:-0.029px;">19.05</div>
<div class="t" style="left:1241.08px;top:622.00px;font-size:13px;line-height:15px;font-weight:400;color:#111;letter-spacing:-0.029px;">20.05</div>
<div class="t" style="left:1289.30px;top:622.00px;font-size:13px;line-height:15px;font-weight:400;color:#111;letter-spacing:-0.029px;">21.05</div>
<div class="t" style="left:1385.20px;top:378.00px;font-size:16px;line-height:17px;font-weight:400;color:#161616;letter-spacing:0.131px;">Выручка</div>
<div class="t" style="left:1385.90px;top:404.00px;font-size:25.5px;line-height:28px;font-weight:400;color:#1c1c1c;letter-spacing:0.287px;">38 498 114</div>
<div class="t" style="left:1654.40px;top:378.00px;font-size:16px;line-height:17px;font-weight:400;color:#161616;letter-spacing:0.129px;">Чистая прибыль</div>
<div class="t" style="left:1655.10px;top:404.00px;font-size:25.5px;line-height:28px;font-weight:400;color:#1c1c1c;letter-spacing:0.097px;">17 471 140</div>
<div class="t" style="left:1385.20px;top:520.00px;font-size:16px;line-height:17px;font-weight:400;color:#161616;letter-spacing:0.061px;">Средний чек</div>
<div class="t" style="left:1385.90px;top:546.00px;font-size:25.5px;line-height:28px;font-weight:400;color:#1c1c1c;letter-spacing:0.072px;">14 981.39</div>
<div class="t" style="left:1654.40px;top:520.00px;font-size:16px;line-height:17px;font-weight:400;color:#161616;letter-spacing:-0.042px;">Счет на оплату</div>
<div class="t" style="left:1655.10px;top:546.00px;font-size:25.5px;line-height:28px;font-weight:400;color:#a6a6a6;letter-spacing:0.000px;">0</div>
<div class="t" style="left:295.40px;top:681.00px;font-size:16px;line-height:17px;font-weight:400;color:#111;letter-spacing:0.068px;">Информация о сотрудниках</div>
<div class="t" style="left:1104.40px;top:681.00px;font-size:16px;line-height:17px;font-weight:400;color:#111;letter-spacing:0.180px;">Продающиеся товары по категориям</div>
<div class="t" style="left:307.40px;top:741.00px;font-size:16px;line-height:17px;font-weight:400;color:#111;letter-spacing:-0.703px;">ФИО</div>
<div class="t" style="left:567.40px;top:741.00px;font-size:16px;line-height:17px;font-weight:400;color:#111;letter-spacing:0.444px;">Должность</div>
<div class="t" style="left:827.60px;top:741.00px;font-size:16px;line-height:17px;font-weight:400;color:#111;letter-spacing:-0.256px;">Сумма</div>
<div class="t" style="left:307.60px;top:798.00px;font-size:16px;line-height:17px;font-weight:400;color:#1e1e1e;letter-spacing:-0.004px;">Мадина</div>
<div class="t" style="left:567.40px;top:798.00px;font-size:16px;line-height:17px;font-weight:400;color:#1e1e1e;letter-spacing:0.156px;">Кассир</div>
<div class="t" style="left:828.30px;top:798.00px;font-size:16px;line-height:17px;font-weight:400;color:#1e1e1e;letter-spacing:-0.308px;">16 487 341</div>
<div class="t" style="left:307.60px;top:847.00px;font-size:16px;line-height:17px;font-weight:400;color:#1e1e1e;letter-spacing:-0.086px;">Абылай</div>
<div class="t" style="left:567.40px;top:847.00px;font-size:16px;line-height:17px;font-weight:400;color:#1e1e1e;letter-spacing:0.274px;">Администратор</div>
<div class="t" style="left:827.60px;top:847.00px;font-size:16px;line-height:17px;font-weight:400;color:#1e1e1e;letter-spacing:-0.168px;">20 983 412</div>
<div class="t" style="left:1116.40px;top:741.00px;font-size:16px;line-height:17px;font-weight:400;color:#111;letter-spacing:0.134px;">Категория</div>
<div class="t" style="left:1376.40px;top:741.00px;font-size:16px;line-height:17px;font-weight:400;color:#111;letter-spacing:0.208px;">Количество</div>
<div class="t" style="left:1636.60px;top:741.00px;font-size:16px;line-height:17px;font-weight:400;color:#111;letter-spacing:-0.256px;">Сумма</div>
<div class="t" style="left:1116.40px;top:798.00px;font-size:16px;line-height:17px;font-weight:400;color:#1e1e1e;letter-spacing:0.218px;">Фрукты</div>
<div class="t" style="left:1376.60px;top:795.00px;font-size:15.3px;line-height:17px;font-weight:400;color:#1e1e1e;letter-spacing:0.090px;">956</div>
<div class="t" style="left:1637.00px;top:798.00px;font-size:16px;line-height:17px;font-weight:400;color:#1e1e1e;letter-spacing:-0.208px;">10 896 725</div>
<div class="t" style="left:1116.40px;top:858.00px;font-size:16px;line-height:17px;font-weight:400;color:#1e1e1e;letter-spacing:-0.233px;">Овощи</div>
<div class="t" style="left:1376.60px;top:858.00px;font-size:15.3px;line-height:17px;font-weight:400;color:#1e1e1e;letter-spacing:0.090px;">783</div>
<div class="t" style="left:1645.60px;top:860.00px;font-size:16px;line-height:17px;font-weight:400;color:#1e1e1e;letter-spacing:-0.199px;">6 178 356</div>
<div class="t" style="left:1115.50px;top:933.00px;font-size:16px;line-height:17px;font-weight:400;color:#1e1e1e;letter-spacing:0.194px;">Молочные изделия</div>
<div class="t" style="left:1375.60px;top:930.00px;font-size:15.3px;line-height:17px;font-weight:400;color:#1e1e1e;letter-spacing:0.090px;">369</div>
<div class="t" style="left:1645.60px;top:933.00px;font-size:16px;line-height:17px;font-weight:400;color:#1e1e1e;letter-spacing:-0.199px;">4 789 123</div>
<div class="t" style="left:1116.40px;top:1009.00px;font-size:16px;line-height:17px;font-weight:400;color:#1e1e1e;letter-spacing:0.198px;">Мясные изделия</div>
<div class="t" style="left:1377.00px;top:1007.00px;font-size:15.3px;line-height:17px;font-weight:400;color:#1e1e1e;letter-spacing:0.090px;">137</div>
<div class="t" style="left:1645.60px;top:1009.00px;font-size:16px;line-height:17px;font-weight:400;color:#1e1e1e;letter-spacing:-0.199px;">3 486 415</div></body></html>
